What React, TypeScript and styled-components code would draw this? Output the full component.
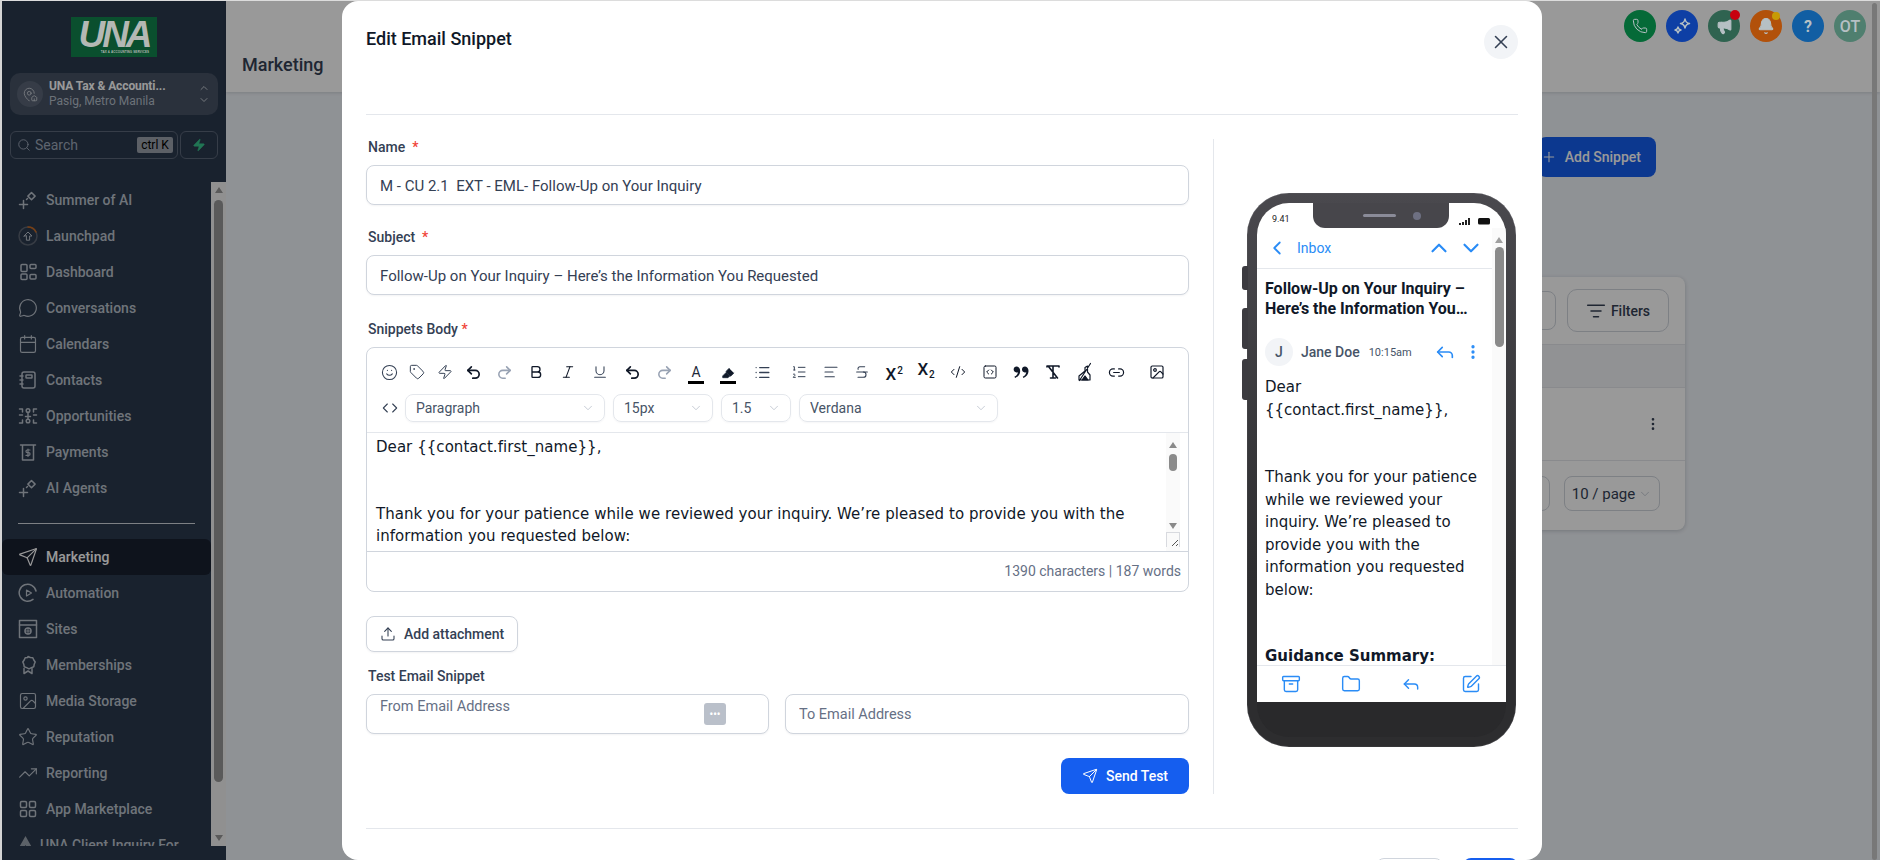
import React from "react";
import styled, { createGlobalStyle } from "styled-components";
import {
  Smile, Tag, Zap, Undo2, Redo2, Bold, Italic, Underline, Highlighter, List, ListOrdered, AlignLeft,
  Strikethrough, CodeXml, SquareCode, Link2, ChevronDown, ChevronUp, ChevronLeft,
  Reply, EllipsisVertical, Archive, Folder, SquarePen, Upload, Send, X, Plus, ListFilter, Search,
  MessageCircle, Calendar, Image as ImageIcon, Star, TrendingUp, Phone, Megaphone, Bell, MapPinHouse, Code,
} from "lucide-react";
import { RiDoubleQuotesR } from "react-icons/ri";

const GlobalStyle = createGlobalStyle`
  html, body { margin: 0; padding: 0; height: 100%; overflow: hidden; background: #fff; }
  body { font-family: Roboto, "Liberation Sans", sans-serif; }
  * { box-sizing: border-box; }
  #root { height: 100%; }
`;

const Root = styled.div`
  position: relative; display: flex; width: 1880px; height: 860px; overflow: hidden;
  border-top: 1px solid #dcdcdc; border-left: 2px solid #d4d4d4;
`;
const Overlay = styled.div`position: absolute; inset: 0; background: rgba(0,0,0,.4); z-index: 10;`;

/* sidebar */
const Sidebar = styled.aside`
  width: 224px; flex: none; display: flex; flex-direction: column; background: #2b394d; padding-top: 16px;
`;
const Logo = styled.div`
  position: relative; z-index: 20; align-self: center; width: 86px; height: 40px; background: #0a4f2e;
  display: flex; flex-direction: column; align-items: center; color: #b4b8b4; overflow: hidden;
`;
const LogoMark = styled.span`
  font: italic 900 37px/30px "Liberation Sans", sans-serif; letter-spacing: -3px; margin-top: 3px;
`;
const LogoSub = styled.span`font: 700 3px/4px "Liberation Sans", sans-serif; letter-spacing: .1px; margin-left: 22px;`;
const Location = styled.div`
  margin: 16px 8px 0; height: 42px; border-radius: 10px; background: #465264; display: flex; align-items: center; padding: 0 8px 0 7px; gap: 6px;
`;
const LocationAvatar = styled.div`
  width: 26px; height: 26px; border-radius: 50%; background: #5a6577; color: #c9ced6; display: flex; align-items: center; justify-content: center; flex: none;
`;
const LocationText = styled.div`flex: 1; min-width: 0; display: flex; flex-direction: column; gap: 1px;`;
const LocationName = styled.div`font-size: 12px; line-height: 14px; font-weight: 700; color: #fff; white-space: nowrap; letter-spacing: -.1px;`;
const LocationSub = styled.div`font-size: 12px; line-height: 15px; color: #b4bec9; white-space: nowrap;`;
const Updown = styled.div`display: flex; flex-direction: column; color: #c2c8d0; line-height: 0;`;
const SearchRow = styled.div`margin: 16px 8px 0; display: flex; gap: 2px; height: 28px;`;
const SearchBox = styled.div`
  width: 168px; border: 1px solid #5a6679; border-radius: 6px; display: flex; align-items: center; padding: 0 4px 1px 6px; color: #9da8b9; font-size: 14px; gap: 4px;
`;
const SearchText = styled.span`flex: 1;`;
const Kbd = styled.span`
  background: #9aa0ab; color: #000; font-size: 12px; line-height: 16px; height: 16px; width: 36px; border-radius: 2px; text-align: center; white-space: nowrap;
`;
const Bolt = styled.div`
  flex: 1; border: 1px solid #5a6679; border-radius: 6px; display: flex; align-items: center; justify-content: center; color: #37c48c;
`;
const NavArea = styled.div`margin-top: 23px; height: 664px; display: flex;`;
const NavList = styled.nav`width: 209px; overflow: hidden;`;
const NavItem = styled.div<{ $active?: boolean }>`
  height: 36px; display: flex; align-items: center; gap: 8px; padding-left: 16px; border-radius: 6px;
  font-size: 14px; font-weight: 500; white-space: nowrap;
  background: ${p => (p.$active ? "#182030" : "transparent")};
  color: ${p => (p.$active ? "#fff" : "#b9c1cb")};
`;
const NavDivider = styled.div`height: 1px; width: 177px; margin: 17px 0 15px 16px; background: #d0d5dd;`;
const ClientItem = styled(NavItem)`gap: 6px; padding-left: 15px;`;
const SideScroll = styled.div`
  width: 15px; background: #f1f1f1; display: flex; flex-direction: column; align-items: center; padding: 5px 0;
`;
const ArrowUp = styled.div<{ $c?: string }>`
  width: 0; height: 0; flex: none; border-left: 4.5px solid transparent; border-right: 4.5px solid transparent; border-bottom: 6px solid ${p => p.$c || "#969696"};
`;
const ArrowDown = styled(ArrowUp)`
  border-bottom: 0; border-top: 6px solid ${p => p.$c || "#969696"};
`;
const SideThumb = styled.div`width: 9px; height: 582px; margin-top: 7px; background: #969696; border-radius: 5px;`;
const Grow = styled.div`flex: 1;`;

/* page */
const Main = styled.main`flex: 1; min-width: 0; display: flex; flex-direction: column; background: #eff3f8;`;
const Header = styled.header`
  height: 91px; background: #fff; padding: 9px 14px 0 16px; display: flex; flex-direction: column;
  box-shadow: 0 1px 3px rgba(16,24,40,.15);
`;
const TopIcons = styled.div`display: flex; justify-content: flex-end; gap: 10px; position: relative; z-index: 20;`;
const Round = styled.div<{ $bg: string; $light?: boolean }>`
  position: relative; width: 32px; height: 32px; border-radius: 50%; background: ${p => p.$bg}; color: #b6c0c4;
  display: flex; align-items: center; justify-content: center; font-size: 16px; font-weight: ${p => (p.$light ? 500 : 700)};
`;
const Dot = styled.span<{ $bg: string; $s: number; $t: number; $r: number }>`
  position: absolute; width: ${p => p.$s}px; height: ${p => p.$s}px; top: ${p => p.$t}px; right: ${p => p.$r}px; border-radius: 50%; background: ${p => p.$bg};
`;
const PageTitle = styled.h1`margin: 12px 0 0; font-size: 18px; line-height: 21px; font-weight: 500; color: #344054;`;
const PageScroll = styled.div`position: absolute; right: 3px; top: 2px; bottom: 0; width: 5px; border-radius: 3px; background: #c8c8c8;`;
const Body = styled.div`flex: 1; padding: 45px 195px 0 16px; display: flex; flex-direction: column;`;
const AddRow = styled.div`display: flex; justify-content: flex-end; padding-right: 29px;`;
const AddButton = styled.div`
  height: 40px; width: 118px; background: #155eef; color: #fff; border-radius: 8px; display: flex; align-items: center; justify-content: flex-end; gap: 8px; padding-right: 15px; font-size: 14px; font-weight: 500;
`;
const Card = styled.section`
  margin: 100px 0 0 300px; height: 253px; background: #fff; border-radius: 8px; box-shadow: 0 1px 4px rgba(16,24,40,.2); display: flex; flex-direction: column;
`;
const CardTop = styled.div`height: 68px; display: flex; justify-content: flex-end; align-items: center; gap: 11px; padding-right: 16px; border-bottom: 1px solid #e4e7ec;`;
const Ghost = styled.div`width: 200px; height: 39px; border: 1px solid #d0d5dd; border-radius: 8px;`;
const Filters = styled.div`
  width: 102px; height: 43px; border: 1px solid #d0d5dd; border-radius: 10px; display: flex; align-items: center; justify-content: center; gap: 5px; color: #344054; font-size: 14px; font-weight: 500;
`;
const CardHead = styled.div`height: 43px; background: #f2f4f7; border-bottom: 1px solid #e4e7ec;`;
const CardRow = styled.div`height: 73px; display: flex; align-items: center; justify-content: flex-end; padding-right: 24px; border-bottom: 1px solid #e4e7ec; color: #344054;`;
const CardFoot = styled.div`flex: 1; display: flex; align-items: flex-start; justify-content: flex-end; gap: 14px; padding: 15px 25px 0 0;`;
const PagerBox = styled.div`width: 40px; height: 35px; border: 1px solid #d0d5dd; border-radius: 8px;`;
const PerPage = styled.div`
  width: 96px; height: 35px; border: 1px solid #d0d5dd; border-radius: 8px; display: flex; align-items: center; justify-content: center; gap: 3px; font-size: 15px; color: #344054; white-space: nowrap;
`;

/* modal */
const Modal = styled.div`
  position: absolute; z-index: 11; left: 340px; top: 0; width: 1200px; height: 859px; background: #fff; border-radius: 16px; padding: 0 24px; overflow: hidden; display: flex; flex-direction: column; color: #344054;
`;
const ModalHead = styled.div`
  height: 114px; flex: none; border-bottom: 1px solid #e4e7ec; display: flex; justify-content: space-between; align-items: flex-start; padding-top: 24px;
`;
const ModalTitle = styled.h2`margin: 3px 0 0; font-size: 18px; line-height: 22px; font-weight: 500; color: #101828;`;
const CloseBtn = styled.div`
  width: 34px; height: 34px; border-radius: 50%; background: #f2f4f7; color: #344054; display: flex; align-items: center; justify-content: center;
`;
const ModalBody = styled.div`flex: none; height: 655px; margin-top: 24px; display: flex;`;
const FormCol = styled.div`width: 823px; flex: none; display: flex; flex-direction: column;`;
const Label = styled.label<{ $mt?: number }>`
  display: block; height: 16px; line-height: 16px; margin: ${p => p.$mt ?? 0}px 0 10px 2px; font-size: 14px; font-weight: 500; color: #344054; white-space: pre;
`;
const Req = styled.span`color: #f04438;`;
const TextInput = styled.input<{ $size?: number }>`
  display: block; width: 100%; height: 40px; border: 1px solid #d0d5dd; border-radius: 8px; box-shadow: 0 1px 2px rgba(16,24,40,.05);
  padding: 1px 12px 0 13px; font: 400 ${p => p.$size ?? 15}px Roboto, sans-serif; color: #344054; outline: none; background: #fff;
  &::placeholder { color: #667085; opacity: 1; }
`;
const Editor = styled.div`height: 245px; border: 1px solid #d0d5dd; border-radius: 8px; display: flex; flex-direction: column; overflow: hidden;`;
const Toolbar = styled.div`height: 85px; flex: none; padding: 12px 0 0 8px; border-bottom: 1px solid #e4e7ec;`;
const ToolRow = styled.div`display: flex; align-items: center; height: 24px;`;
const Tool = styled.div<{ $w?: number; $ml?: number; $muted?: boolean }>`
  width: ${p => p.$w ?? 32}px; margin-left: ${p => p.$ml ?? 0}px; height: 24px; flex: none; display: flex; align-items: center; justify-content: center;
  color: ${p => (p.$muted ? "#98a2b3" : "#344054")};
`;
const ColorBar = styled.div`
  width: 16px; height: 24px; display: flex; flex-direction: column; align-items: center; justify-content: flex-end; color: #1d2939;
  font-size: 14px; line-height: 16px; border-bottom: 3px solid #000; padding-bottom: 1px;
`;
const ScriptGlyph = styled.span`font-size: 17px; font-weight: 500; color: #101828; line-height: 20px;`;
const ScriptNum = styled.span<{ $sub?: boolean }>`
  font-size: 10px; font-weight: 500; vertical-align: ${p => (p.$sub ? "-3px" : "6px")}; margin-left: 1px;
`;
const SelectRow = styled.div`display: flex; align-items: center; margin-top: 10px; gap: 8px;`;
const CodeSlot = styled.div`width: 22px; margin-right: -4px; margin-left: 4px; color: #344054; display: flex; justify-content: center;`;
const Select = styled.div<{ $w: number }>`
  width: ${p => p.$w}px; height: 28px; border: 1px solid #e4e7ec; border-radius: 8px; display: flex; align-items: center; justify-content: space-between;
  padding: 0 9px 0 10px; font-size: 14px; color: #475467; box-shadow: 0 1px 2px rgba(16,24,40,.04);
`;
const SelectChev = styled.span`color: #b0b8c4; display: flex;`;
const EditArea = styled.div`flex: 1; min-height: 0; display: flex; overflow: hidden;`;
const EditText = styled.div`
  flex: 1; min-width: 0; padding: 3px 0 0 9px; font: 15px/22.5px Verdana, "DejaVu Sans", sans-serif; letter-spacing: .05px; color: #101828; overflow: hidden;
`;
const EditLine = styled.p`margin: 0; max-width: 782px;`;
const EditGap = styled.div`height: 44px;`;
const EditScroll = styled.div`
  width: 14px; margin-right: 8px; flex: none; background: #fafafa; display: flex; flex-direction: column; align-items: center; padding-top: 9px;
`;
const EditThumb = styled.div`width: 8px; height: 17px; border-radius: 4px; background: #8a8a8a; margin-top: 6px;`;
const Resizer = styled.div`
  width: 14px; height: 15px; margin: 3px 0 4px; border: 1px solid #d8dadf; border-bottom: 0; display: flex; align-items: flex-end; justify-content: flex-end;
`;
const EditFoot = styled.div`
  height: 40px; flex: none; border-top: 1px solid #d0d5dd; display: flex; align-items: center; justify-content: flex-end; padding: 0 7px 2px 0; font-size: 14px; color: #667085;
`;
const AttachBtn = styled.div`
  margin-top: 24px; width: 152px; height: 36px; border: 1px solid #d0d5dd; border-radius: 8px; display: flex; align-items: center; gap: 8px; padding-left: 13px; font-size: 14px; font-weight: 500; color: #344054; box-shadow: 0 1px 2px rgba(16,24,40,.05);
`;
const TestRow = styled.div`display: grid; grid-template-columns: 403px 404px; gap: 16px;`;
const InputWrap = styled.div`position: relative;`;
const FromInput = styled(TextInput)`padding-bottom: 16px; padding-top: 0;`;
const Widget = styled.div`
  position: absolute; right: 43px; top: 9px; width: 22px; height: 22px; border-radius: 3px; background: #bac0ca; color: #fff; display: flex; align-items: center; justify-content: center; font-size: 10px; font-weight: 700;
`;
const SendRow = styled.div`display: flex; justify-content: flex-end; margin-top: 24px;`;
const SendBtn = styled.div`
  width: 128px; height: 36px; border-radius: 8px; background: #155eef; color: #fff; display: flex; align-items: center; justify-content: center; gap: 8px; font-size: 14px; font-weight: 500;
`;
const PreviewCol = styled.div`margin-left: 24px; width: 305px; border-left: 1px solid #e4e7ec; padding: 54px 0 0 33px;`;

/* phone */
const PhoneShell = styled.div`
  position: relative; width: 269px; height: 554px; border-radius: 42px; padding: 10px; background: linear-gradient(#4a494e, #2d2d2f 70%);
  box-shadow: inset 0 0 1px #8a8a90;
`;
const SideKey = styled.span<{ $t: number; $h: number }>`
  position: absolute; left: -5px; top: ${p => p.$t}px; width: 6px; height: ${p => p.$h}px; background: #3c3b40; border-radius: 3px 0 0 3px;
`;
const ScreenMask = styled.div`height: 534px; border-radius: 32px; background: #29292b; overflow: hidden;`;
const Screen = styled.div`position: relative; height: 499px; background: #fff; display: flex; flex-direction: column; overflow: hidden;`;
const Notch = styled.div`
  position: absolute; top: 0; left: 56px; width: 136px; height: 25px; background: #47464b; border-radius: 0 0 12px 12px; display: flex; align-items: center; justify-content: center; gap: 17px; padding-left: 22px;
`;
const Speaker = styled.span`width: 33px; height: 3px; border-radius: 2px; background: #8a8b98;`;
const Camera = styled.span`width: 8px; height: 8px; border-radius: 50%; background: #6e7082;`;
const StatusBar = styled.div`
  height: 25px; flex: none; display: flex; align-items: flex-end; justify-content: space-between; padding: 0 15px 3px 15px; font-size: 9px; line-height: 11px; color: #222;
`;
const StatusIcons = styled.div`display: flex; align-items: center; gap: 7px;`;
const Middle = styled.div`flex: 1; min-height: 0; display: flex;`;
const MailCol = styled.div`flex: 1; min-width: 0; display: flex; flex-direction: column; overflow: hidden;`;
const MailNav = styled.div`
  height: 41px; flex: none; border-bottom: 1px solid #e4e7ec; display: flex; align-items: center; padding: 0 8px 0 9px; color: #2a8cf6; font-size: 14px; gap: 6px;
`;
const InboxLabel = styled.span`flex: 1; margin-left: 3px;`;
const MailSubject = styled.div`
  margin: 10px 8px 0; font-size: 16px; line-height: 20px; font-weight: 700; color: #101828; height: 40px; overflow: hidden;
  display: -webkit-box; -webkit-box-orient: vertical; -webkit-line-clamp: 2; flex: none;
`;
const Sender = styled.div`margin: 19px 8px 0; display: flex; align-items: center; height: 28px; flex: none;`;
const Avatar = styled.div`
  width: 28px; height: 28px; border-radius: 50%; background: #f2f4f7; color: #475467; font-size: 14px; font-weight: 500; display: flex; align-items: center; justify-content: center; margin-right: 8px; flex: none;
`;
const SenderName = styled.span`font-size: 14px; font-weight: 500; color: #475467; white-space: nowrap;`;
const SenderTime = styled.span`font-size: 11px; color: #475467; margin-left: 9px; flex: 1; white-space: nowrap;`;
const BlueIcons = styled.div`display: flex; align-items: center; gap: 8px; color: #2a8cf6; margin-right: 2px;`;
const MailBody = styled.div`margin: 10px 6px 0 8px; font: 15px/22.5px Verdana, "DejaVu Sans", sans-serif; color: #101828;`;
const MailGap = styled.div<{ $h?: number }>`height: ${p => p.$h ?? 45}px;`;
const MailStrong = styled.strong`font-weight: 700;`;
const PhoneScroll = styled.div`
  width: 14px; flex: none; background: #fafafa; display: flex; flex-direction: column; align-items: center; padding-top: 9px;
`;
const PhoneThumb = styled.div`width: 9px; height: 100px; border-radius: 5px; background: #8a8a8a; margin-top: 4px;`;
const BottomBar = styled.div`
  height: 37px; flex: none; border-top: 1px solid #e4e7ec; display: grid; grid-template-columns: repeat(4, 60px); padding-left: 4px; color: #2a8cf6; background: #fff;
`;
const BottomCell = styled.div`display: flex; align-items: center; justify-content: center;`;

const ModalDivider = styled.div`height: 1px; background: #e4e7ec; flex: none; margin-top: 34px;`;
const ModalFoot = styled.div`display: flex; justify-content: flex-end; gap: 20px; margin-top: 29px;`;
const CancelBtn = styled.div`
  width: 67px; height: 36px; border: 1px solid #d0d5dd; border-radius: 8px; display: flex; align-items: center; justify-content: center; font-size: 14px; font-weight: 500;
`;
const SaveBtn = styled.div`
  width: 55px; height: 36px; border-radius: 8px; background: #155eef; color: #fff; display: flex; align-items: center; justify-content: center; font-size: 14px; font-weight: 500;
`;

/* drawn icons */
const S = { fill: "none", stroke: "currentColor", strokeWidth: 1.5, strokeLinecap: "round" as const, strokeLinejoin: "round" as const };
const Ico = ({ children, w = 20 }: { children: React.ReactNode; w?: number }) => (
  <svg width={w} height={20} viewBox={`0 0 ${w} 20`} {...S} style={{ flex: "none" }}>{children}</svg>
);
const AiIcon = () => (
  <Ico><path d="M13.5 2.5l3.6 3.6-3.6 3.6-3.6-3.6zM1.5 14.5h8M5.5 10.5v8" /><path d="M8.5 9.5l1-1" /></Ico>
);
const LaunchIcon = () => (
  <Ico>
    <circle cx="10" cy="10" r="9" stroke="#5b6472" />
    <path d="M10 1a9 9 0 0 1 8 5" stroke="#c96a22" />
    <path d="M6 10l4-4 4 4h-2.4v4.2H8.400V10z" strokeWidth="1" />
  </Ico>
);
const DashIcon = () => (
  <Ico>
    <rect x="3" y="2.500" width="6" height="7" rx="1" /><rect x="12" y="2.500" width="6" height="4" rx="1" />
    <rect x="3" y="12" width="6" height="5.500" rx="1" /><rect x="12" y="9.500" width="6" height="4.500" rx="1" transform="translate(0 3)" />
  </Ico>
);
const ContactIcon = () => (
  <Ico>
    <rect x="4" y="2" width="13" height="16" rx="2" /><rect x="8" y="5" width="6" height="3" rx=".5" />
    <path d="M2 6h3M2 10h3M2 14h3" />
  </Ico>
);
const OppIcon = () => (
  <Ico>
    <circle cx="10" cy="4.500" r="1.800" /><circle cx="10" cy="15" r="1.800" /><path d="M7.500 10.500h5M10 7v6" />
    <path d="M1.500 3h3v3M18.500 3h-3v3M1.500 17h3v-3M18.500 17h-3v-3M1.500 9h3M15.500 9h3" />
  </Ico>
);
const PayIcon = () => (
  <Ico>
    <path d="M2.500 3h15M4.500 3v15h11V3" /><path d="M12 8H9.300a1.300 1.300 0 0 0 0 2.700h1.400a1.300 1.300 0 0 1 0 2.700H8M10 7v7.500" strokeWidth="1.200" />
  </Ico>
);
const SendIco = () => <Send size={20} strokeWidth={1.4} />;
const AutoIcon = () => (
  <Ico><path d="M18 8a8.500 8.500 0 1 0-3 8.400" /><path d="M8.500 7l5 3-5 3z" strokeWidth="1.200" /></Ico>
);
const SiteIcon = () => (
  <Ico>
    <rect x="1.500" y="1.500" width="17" height="17" /><path d="M1.500 6h17" /><circle cx="10" cy="12" r="3" />
    <path d="M7 12h6M10 9v6" strokeWidth="1" />
  </Ico>
);
const MemberIcon = () => (
  <Ico>
    <path d="M10 1.500l2.300 1 2.500.2 1 2.300 1.400 2-1 2.300-.4 2.400-2.400.9-2.400 1.200-2.400-1.200-2.400-.9-.4-2.400-1-2.300 1.400-2 1-2.300 2.500-.2z" />
    <path d="M6 13.500V18.500l4-2.500 4 2.500v-5" />
  </Ico>
);
const AppIcon = () => (
  <Ico>
    <rect x="2.500" y="2.500" width="6" height="6" rx="1.200" /><rect x="11.500" y="2.500" width="6" height="6" rx="1.200" />
    <rect x="2.500" y="11.500" width="6" height="6" rx="1.200" /><rect x="11.500" y="11.500" width="6" height="6" rx="1.200" />
  </Ico>
);
const UnaMark = () => (
  <svg width="17" height="20" viewBox="0 0 17 20" style={{ flex: "none" }}><path d="M8.500 1l8.500 15h-5L8.500 10 5 16H0z" fill="#9aa3ad" /></svg>
);
const TwoSpark = () => (
  <svg width="20" height="20" viewBox="0 0 20 20" fill="none" stroke="currentColor" strokeWidth="1.500" strokeLinejoin="round">
    <path d="M13 3c.5 3 1.500 4 4.500 4.500-3 .5-4 1.500-4.500 4.500-.5-3-1.500-4-4.500-4.500 3-.5 4-1.500 4.500-4.500zM6 11c.3 2 1 2.700 3 3-2 .3-2.700 1-3 3-.3-2-1-2.700-3-3 2-.3 2.700-1 3-3z" />
  </svg>
);
const ClearFormat = () => (
  <svg width="18" height="18" viewBox="0 0 18 18" fill="none" stroke="#101828" strokeWidth="1.600" strokeLinecap="round" strokeLinejoin="round">
    <path d="M3 3h12M3 3v1M15 3v1M9 3v11M6.500 15h5M4.500 3.500L13.500 15" />
  </svg>
);
const PaintOff = () => (
  <svg width="18" height="20" viewBox="0 0 18 20" fill="none" stroke="#101828" strokeWidth="1.200" strokeLinejoin="round" strokeLinecap="round">
    <path d="M3 18h11v-5l-2.500-3V4L9 5.500V9L3 14zM14.500 1.500L3.500 18.500" />
    <path d="M6 18l3-4 3 4z" fill="#101828" />
  </svg>
);
const ResizeGrip = () => (
  <svg width="12" height="12" viewBox="0 0 12 12" stroke="#555" strokeWidth="1"><path d="M5 11l6-6M9 11l2-2" /></svg>
);
const Signal = () => (
  <svg width="12" height="7" viewBox="0 0 12 7" fill="#222"><rect x="0" y="5" width="2" height="2" /><rect x="3" y="4" width="2" height="3" /><rect x="6" y="2" width="2" height="5" /><rect x="9" y="0" width="2" height="7" /></svg>
);
const Battery = () => (
  <svg width="13" height="7" viewBox="0 0 13 7" fill="#111"><rect x="0" y="0" width="12" height="6.500" rx="1.500" /></svg>
);

const navTop: [string, React.ReactNode][] = [
  ["Summer of AI", <AiIcon />],
  ["Launchpad", <LaunchIcon />],
  ["Dashboard", <DashIcon />],
  ["Conversations", <MessageCircle size={20} strokeWidth={1.4} />],
  ["Calendars", <Calendar size={20} strokeWidth={1.4} />],
  ["Contacts", <ContactIcon />],
  ["Opportunities", <OppIcon />],
  ["Payments", <PayIcon />],
  ["AI Agents", <AiIcon />],
];
const navBottom: [string, React.ReactNode][] = [
  ["Automation", <AutoIcon />],
  ["Sites", <SiteIcon />],
  ["Memberships", <MemberIcon />],
  ["Media Storage", <ImageIcon size={20} strokeWidth={1.4} />],
  ["Reputation", <Star size={20} strokeWidth={1.4} />],
  ["Reporting", <TrendingUp size={20} strokeWidth={1.4} />],
  ["App Marketplace", <AppIcon />],
];

const Chev = () => <SelectChev><ChevronDown size={14} strokeWidth={1.2} /></SelectChev>;

export default function App() {
  return (
    <Root>
      <GlobalStyle />
      <Sidebar>
        <Logo>
          <LogoMark>UNA</LogoMark>
          <LogoSub>TAX &amp; ACCOUNTING SERVICES</LogoSub>
        </Logo>
        <Location>
          <LocationAvatar><MapPinHouse size={15} strokeWidth={1.4} /></LocationAvatar>
          <LocationText>
            <LocationName>UNA Tax &amp; Accounti...</LocationName>
            <LocationSub>Pasig, Metro Manila</LocationSub>
          </LocationText>
          <Updown>
            <ChevronUp size={12} strokeWidth={2} />
            <ChevronDown size={12} strokeWidth={2} />
          </Updown>
        </Location>
        <SearchRow>
          <SearchBox>
            <Search size={14} strokeWidth={1.6} />
            <SearchText>Search</SearchText>
            <Kbd>ctrl K</Kbd>
          </SearchBox>
          <Bolt><Zap size={14} fill="currentColor" strokeWidth={1} /></Bolt>
        </SearchRow>
        <NavArea>
          <NavList>
            {navTop.map(([t, i]) => <NavItem key={t}>{i}{t}</NavItem>)}
            <NavDivider />
            <NavItem $active><SendIco />Marketing</NavItem>
            {navBottom.map(([t, i]) => <NavItem key={t}>{i}{t}</NavItem>)}
            <ClientItem><UnaMark />UNA Client Inquiry For</ClientItem>
          </NavList>
          <SideScroll>
            <ArrowUp />
            <SideThumb />
            <Grow />
            <ArrowDown />
          </SideScroll>
        </NavArea>
      </Sidebar>

      <Main>
        <Header>
          <TopIcons>
            <Round $bg="#056a38"><Phone size={16} strokeWidth={1.5} /></Round>
            <Round $bg="#0e3fa5"><TwoSpark /></Round>
            <Round $bg="#2f6350"><Megaphone size={17} fill="currentColor" strokeWidth={1.5} /><Dot $bg="#c8000f" $s={10} $t={0} $r={0} /></Round>
            <Round $bg="#b2510a"><Bell size={18} fill="currentColor" strokeWidth={1.5} /><Dot $bg="#c79a05" $s={8} $t={2} $r={2} /></Round>
            <Round $bg="#115ea3">?</Round>
            <Round $bg="#4f7f6f" $light>OT</Round>
          </TopIcons>
          <PageTitle>Marketing</PageTitle>
        </Header>
        <Body>
          <AddRow>
            <AddButton><Plus size={16} strokeWidth={1.6} />Add Snippet</AddButton>
          </AddRow>
          <Card>
            <CardTop>
              <Ghost />
              <Filters><ListFilter size={20} strokeWidth={1.8} />Filters</Filters>
            </CardTop>
            <CardHead />
            <CardRow><EllipsisVertical size={16} strokeWidth={2} /></CardRow>
            <CardFoot>
              <PagerBox />
              <PerPage>10 / page<SelectChev><ChevronDown size={14} strokeWidth={1.2} /></SelectChev></PerPage>
            </CardFoot>
          </Card>
        </Body>
        <PageScroll />
      </Main>

      <Overlay />

      <Modal>
        <ModalHead>
          <ModalTitle>Edit Email Snippet</ModalTitle>
          <CloseBtn><X size={22} strokeWidth={1.7} /></CloseBtn>
        </ModalHead>
        <ModalBody>
          <FormCol>
            <Label>Name  <Req>*</Req></Label>
            <TextInput readOnly defaultValue="M - CU 2.1  EXT - EML- Follow-Up on Your Inquiry" />
            <Label $mt={24}>Subject  <Req>*</Req></Label>
            <TextInput readOnly defaultValue="Follow-Up on Your Inquiry – Here’s the Information You Requested" />
            <Label $mt={26}>Snippets Body <Req>*</Req></Label>
            <Editor>
              <Toolbar>
                <ToolRow>
                  <Tool $w={28}><Smile size={17} strokeWidth={1.5} /></Tool>
                  <Tool $w={28}><Tag size={16} strokeWidth={1.5} /></Tool>
                  <Tool $w={28}><Zap size={16} strokeWidth={1.5} /></Tool>
                  <Tool $w={28}><Undo2 size={17} strokeWidth={2.4} color="#101828" /></Tool>
                  <Tool $ml={1} $muted><Redo2 size={17} strokeWidth={2.2} /></Tool>
                  <Tool><Bold size={16} strokeWidth={2} color="#101828" /></Tool>
                  <Tool><Italic size={16} strokeWidth={1.6} color="#101828" /></Tool>
                  <Tool><Underline size={16} strokeWidth={1.6} /></Tool>
                  <Tool><Undo2 size={17} strokeWidth={2.4} color="#101828" /></Tool>
                  <Tool $muted><Redo2 size={17} strokeWidth={2.2} /></Tool>
                  <Tool><ColorBar>A</ColorBar></Tool>
                  <Tool><ColorBar><Highlighter size={14} fill="#101828" strokeWidth={1.5} /></ColorBar></Tool>
                  <Tool $ml={2}><List size={17} strokeWidth={1.8} /></Tool>
                  <Tool $ml={5} $w={31.8}><ListOrdered size={16} strokeWidth={1.5} /></Tool>
                  <Tool $w={31.8}><AlignLeft size={16} strokeWidth={1.6} /></Tool>
                  <Tool $w={31.8}><Strikethrough size={16} strokeWidth={1.6} /></Tool>
                  <Tool $w={31.8}><ScriptGlyph>X<ScriptNum>2</ScriptNum></ScriptGlyph></Tool>
                  <Tool $w={31.8}><ScriptGlyph>X<ScriptNum $sub>2</ScriptNum></ScriptGlyph></Tool>
                  <Tool $w={31.8}><CodeXml size={16} strokeWidth={1.5} color="#101828" /></Tool>
                  <Tool $w={31.8}><SquareCode size={16} strokeWidth={1.5} color="#101828" /></Tool>
                  <Tool $w={31.8}><RiDoubleQuotesR size={20} color="#101828" /></Tool>
                  <Tool $w={31.8}><ClearFormat /></Tool>
                  <Tool $w={31.8}><PaintOff /></Tool>
                  <Tool $w={31.8}><Link2 size={17} strokeWidth={1.7} color="#101828" /></Tool>
                  <Tool $w={31.8} $ml={8}><ImageIcon size={16} strokeWidth={1.8} color="#101828" /></Tool>
                </ToolRow>
                <SelectRow>
                  <CodeSlot><Code size={16} strokeWidth={1.6} /></CodeSlot>
                  <Select $w={200}>Paragraph<Chev /></Select>
                  <Select $w={100}>15px<Chev /></Select>
                  <Select $w={70}>1.5<Chev /></Select>
                  <Select $w={199}>Verdana<Chev /></Select>
                </SelectRow>
              </Toolbar>
              <EditArea>
                <EditText>
                  <EditLine>Dear {"{{contact.first_name}}"},</EditLine>
                  <EditGap />
                  <EditLine>Thank you for your patience while we reviewed your inquiry. We’re pleased to provide you with the information you requested below:</EditLine>
                </EditText>
                <EditScroll>
                  <ArrowUp $c="#8a8a8a" />
                  <EditThumb />
                  <Grow />
                  <ArrowDown $c="#8a8a8a" />
                  <Resizer><ResizeGrip /></Resizer>
                </EditScroll>
              </EditArea>
              <EditFoot>1390 characters | 187 words</EditFoot>
            </Editor>
            <AttachBtn><Upload size={16} strokeWidth={1.6} />Add attachment</AttachBtn>
            <Label $mt={16}>Test Email Snippet</Label>
            <TestRow>
              <InputWrap>
                <FromInput $size={14.5} readOnly placeholder="From Email Address" />
                <Widget>•••</Widget>
              </InputWrap>
              <TextInput $size={14.5} readOnly placeholder="To Email Address" />
            </TestRow>
            <SendRow>
              <SendBtn><Send size={16} strokeWidth={1.5} />Send Test</SendBtn>
            </SendRow>
          </FormCol>
          <PreviewCol>
            <PhoneShell>
              <SideKey $t={73} $h={24} />
              <SideKey $t={115} $h={41} />
              <SideKey $t={166} $h={41} />
              <ScreenMask>
                <Screen>
                  <Notch><Speaker /><Camera /></Notch>
                  <StatusBar>
                    <span>9.41</span>
                    <StatusIcons><Signal /><Battery /></StatusIcons>
                  </StatusBar>
                  <Middle>
                    <MailCol>
                      <MailNav>
                        <ChevronLeft size={22} strokeWidth={2} />
                        <InboxLabel>Inbox</InboxLabel>
                        <ChevronUp size={26} strokeWidth={2} />
                        <ChevronDown size={26} strokeWidth={2} />
                      </MailNav>
                      <MailSubject>Follow-Up on Your Inquiry – Here’s the Information You Requested</MailSubject>
                      <Sender>
                        <Avatar>J</Avatar>
                        <SenderName>Jane Doe</SenderName>
                        <SenderTime>10:15am</SenderTime>
                        <BlueIcons>
                          <Reply size={22} strokeWidth={1.8} />
                          <EllipsisVertical size={18} strokeWidth={2.4} />
                        </BlueIcons>
                      </Sender>
                      <MailBody>
                        Dear {"{{contact.first_name}}"},
                        <MailGap />
                        Thank you for your patience while we reviewed your inquiry. We’re pleased to provide you with the information you requested below:
                        <MailGap $h={44} />
                        <MailStrong>Guidance Summary:</MailStrong>
                      </MailBody>
                    </MailCol>
                    <PhoneScroll>
                      <ArrowUp $c="#a0a0a0" />
                      <PhoneThumb />
                    </PhoneScroll>
                  </Middle>
                  <BottomBar>
                    <BottomCell><Archive size={20} strokeWidth={1.7} /></BottomCell>
                    <BottomCell><Folder size={20} strokeWidth={1.7} /></BottomCell>
                    <BottomCell><Reply size={20} strokeWidth={1.7} /></BottomCell>
                    <BottomCell><SquarePen size={20} strokeWidth={1.7} /></BottomCell>
                  </BottomBar>
                </Screen>
              </ScreenMask>
            </PhoneShell>
          </PreviewCol>
        </ModalBody>
        <ModalDivider />
        <ModalFoot>
          <CancelBtn>Cancel</CancelBtn>
          <SaveBtn>Save</SaveBtn>
        </ModalFoot>
      </Modal>
    </Root>
  );
}
